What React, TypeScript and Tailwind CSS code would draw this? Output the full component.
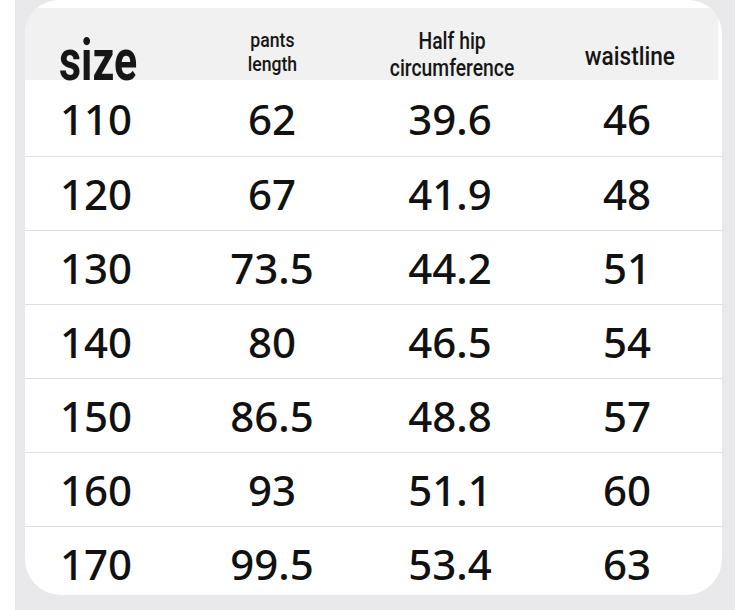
const rows = [
  ['110', '62', '39.6', '46'],
  ['120', '67', '41.9', '48'],
  ['130', '73.5', '44.2', '51'],
  ['140', '80', '46.5', '54'],
  ['150', '86.5', '48.8', '57'],
  ['160', '93', '51.1', '60'],
  ['170', '99.5', '53.4', '63'],
]

const cols = ['w-[142px]', 'ml-[18px] w-[174px]', 'ml-[4px] w-[174px]', 'ml-[3px] w-[174px]']

export default function App() {
  return (
    <div className="w-[750px] h-[610px] bg-white overflow-hidden">
      <div className="ml-[15px] w-[720px] h-[610px] bg-[#e9e9eb] pl-[10px] pr-[13px]">
        <div className="h-[595px] bg-white rounded-b-[36px] rounded-t-[34px] overflow-hidden">
          {/* header */}
          <div
            className="mt-[8px] mr-[4px] h-[72px] bg-[#f1f1f1] flex items-start text-[#161616]"
            style={{ fontFamily: 'Roboto, "Liberation Sans", sans-serif' }}
          >
            <div className={cols[0] + ' pl-[34px] pt-[23px]'}>
              <span className="inline-block origin-left scale-x-[0.74] text-[58px] font-bold leading-none">
                size
              </span>
            </div>
            <div className={cols[1] + ' flex justify-center pt-[20px]'}>
              <span className="inline-block scale-x-[0.84] text-[21px] font-medium leading-[24px] text-center">
                pants
                <br />
                length
              </span>
            </div>
            <div className={cols[2] + ' flex justify-center pt-[20px] pl-[4px]'}>
              <span className="inline-block scale-x-[0.84] text-[23px] font-medium leading-[27px] text-center whitespace-nowrap">
                Half hip
                <br />
                circumference
              </span>
            </div>
            <div className={cols[3] + ' flex justify-center pt-[35px] pl-[6px]'}>
              <span className="inline-block scale-x-[0.87] text-[26px] font-medium leading-none">waistline</span>
            </div>
          </div>

          {/* rows */}
          {rows.map((r, i) => (
            <div
              key={r[0]}
              className={
                'flex items-center text-[#111] ' +
                (i === 0 ? 'h-[76px] pt-[2px]' : 'h-[74px] pt-[1px] border-t border-[#dedede]')
              }
              style={{ fontFamily: '"Noto Sans", "Open Sans", sans-serif' }}
            >
              {r.map((v, j) => (
                <div key={j} className={cols[j] + ' text-center text-[42px] font-medium leading-none'}>
                  {v}
                </div>
              ))}
            </div>
          ))}
        </div>
      </div>
    </div>
  )
}
